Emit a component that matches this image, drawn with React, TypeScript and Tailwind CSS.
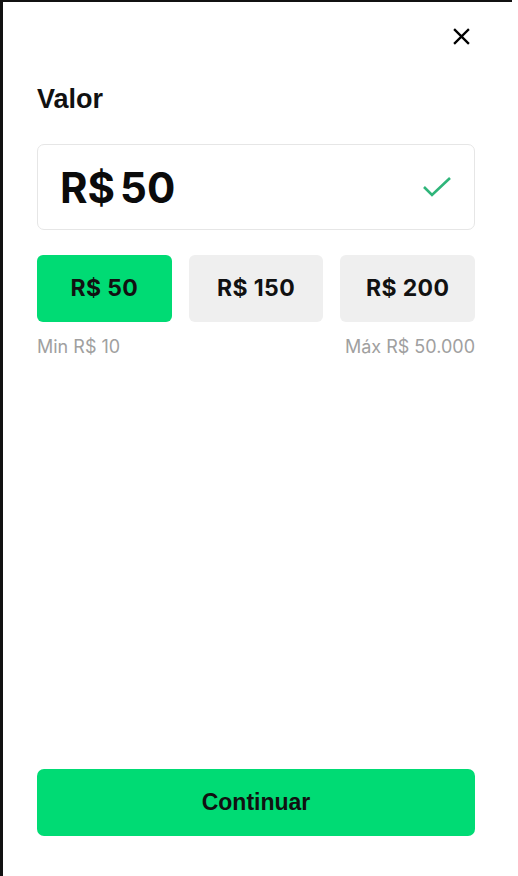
import { useState } from "react";

const presets = [50, 150, 200];

const DepositSheet = () => {
  const [amount, setAmount] = useState(50);

  return (
    <div className="flex min-h-[876px] w-[518px] bg-white">
      <div className="flex w-[512px] flex-col border-l-[3px] border-t-2 border-[#111] pb-[40px] pl-[34px] pr-[37px] pt-[22px]">
        <div className="flex justify-end pr-[2px]">
          <button className="flex h-[24px] w-[24px] items-center justify-center text-black">
            <svg width="17" height="17" viewBox="0 0 18 18" fill="none" stroke="currentColor" strokeWidth="2.4" strokeLinecap="square">
              <path d="M2 2L16 16M16 2L2 16" />
            </svg>
          </button>
        </div>

        <h2 className="mt-[35px] font-['Liberation_Sans',Arial,sans-serif] text-[27px] font-bold leading-[32px] text-[#111]">
          Valor
        </h2>

        <div className="mt-[29px] flex h-[86px] items-center justify-between rounded-[7px] border border-[#e6e6e6] pl-[22px] pr-[22px]">
          <span className="font-['Inter',sans-serif] text-[42px] font-bold text-[#0b0b0b]">
            R$<span className="ml-[5px]">{amount}</span>
          </span>
          <svg width="30" height="24" viewBox="0 0 30 24" fill="none" stroke="#2fb57a" strokeWidth="2.6">
            <path d="M2 12L10 20L28 3" />
          </svg>
        </div>

        <div className="mt-[25px] grid grid-cols-3 gap-[17px]">
          {presets.map((value) => (
            <button
              key={value}
              onClick={() => setAmount(value)}
              className={`h-[67px] rounded-[6px] font-['Inter',sans-serif] text-[23px] font-bold tracking-[0.4px] text-[#111] ${
                amount === value ? "bg-[#00db74]" : "bg-[#efefef]"
              }`}
            >
              R$ {value}
            </button>
          ))}
        </div>

        <div className="mt-[12px] flex justify-between font-['Inter',sans-serif] text-[18px] leading-[26px] text-[#a0a0a0]">
          <span>Min R$ 10</span>
          <span>Máx R$ 50.000</span>
        </div>

        <div className="flex-1" />

        <button className="h-[67px] rounded-[7px] bg-[#00db74] font-['Liberation_Sans',Arial,sans-serif] text-[23px] font-bold text-[#111]">
          Continuar
        </button>
      </div>
    </div>
  );
};

export default function App() {
  return <DepositSheet />;
}
